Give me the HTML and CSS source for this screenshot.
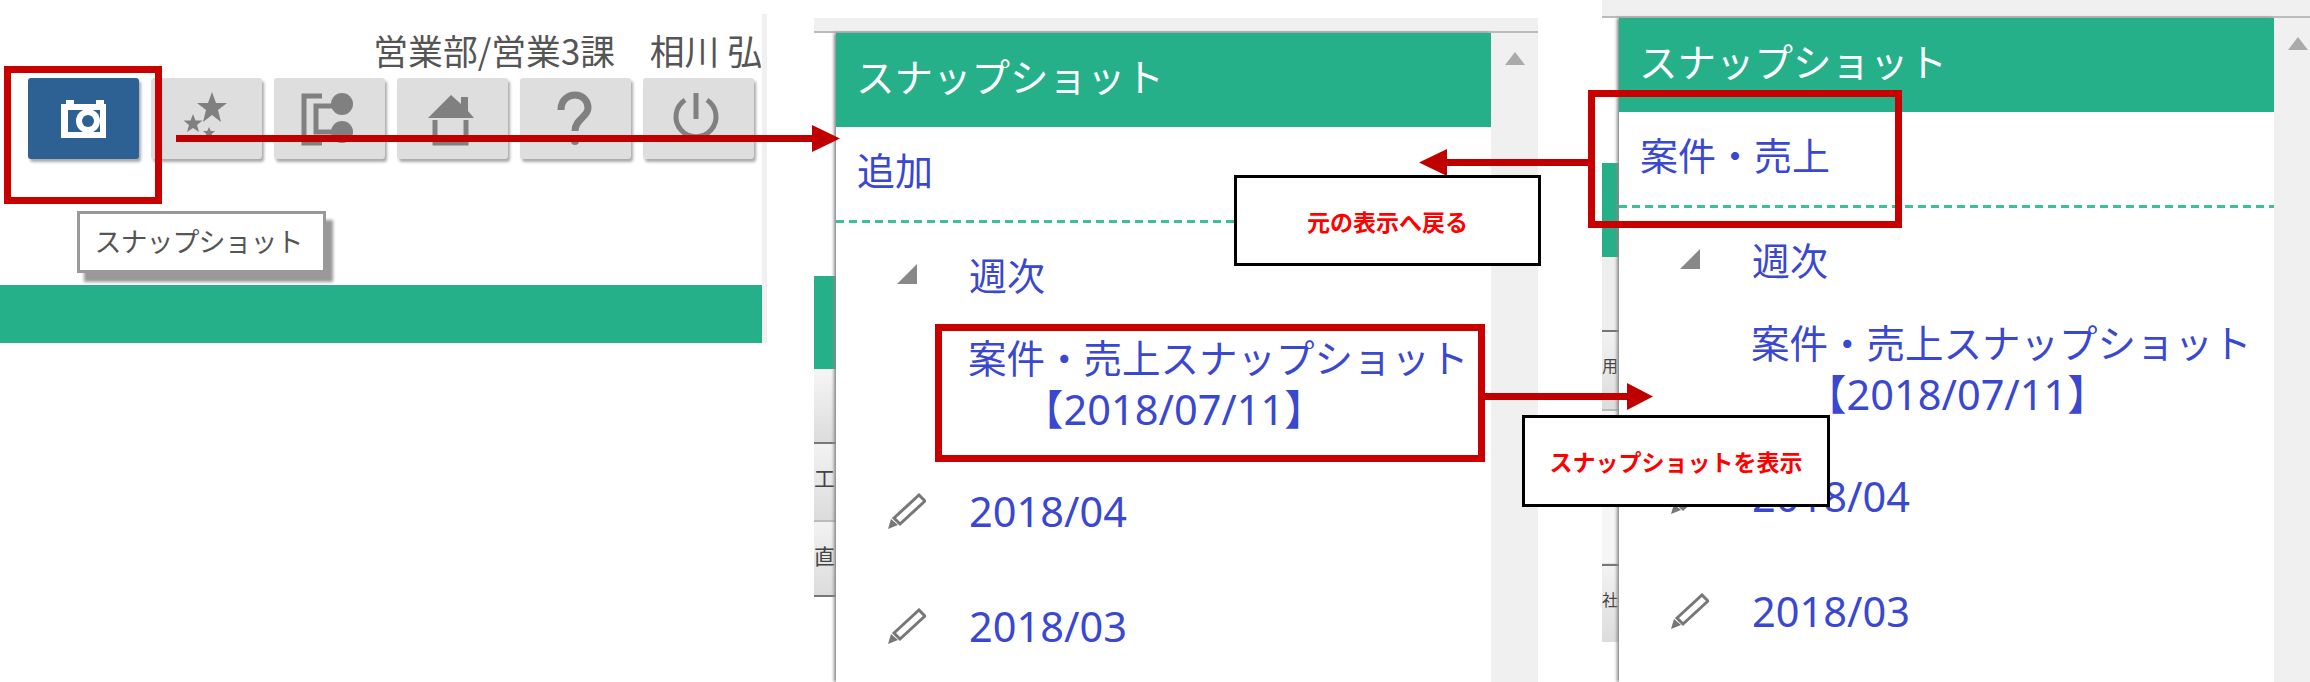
FILE: index.html
```html
<!DOCTYPE html>
<html lang="ja">
<head>
    <meta charset="utf-8">
    <title>スナップショット</title>
    <link rel="stylesheet" href="styles.css">
</head>
<body>
    <section class="menu">
        <div class="user">営業部/営業3課　相川 弘</div>
        <div class="buttons">
            <div class="btn active">
                <svg viewBox="0 0 111 81">
                    <path class="white" d="M33 26h5v-4h8v4h22v-4h8v4h2v34h-45z"/>
                    <rect class="blue" x="40" y="32" width="32" height="22"/>
                    <circle class="white" cx="60" cy="43" r="12"/>
                    <circle class="blue" cx="60" cy="43" r="6"/>
                </svg>
            </div>
            <div class="btn">
                <svg viewBox="0 0 111 81">
                    <path class="grey" d="M61 14l4 11 11 0-9 7 3 12-9-7-9 7 3-12-9-7 11 0z"/>
                    <path class="grey" d="M42 36l2.500 6.500 7 0-5.500 4.500 2 7-6-4-6 4 2-7-5.500-4.500 7 0z"/>
                    <path class="grey" d="M58 49l1.800 4 4.200 0-3.300 3 1.300 5-4-3-4 3 1.300-5-3.300-3 4.200 0z"/>
                </svg>
            </div>
            <div class="btn">
                <svg viewBox="0 0 111 81">
                    <path class="line" d="M48 18H30V65H48"/>
                    <path class="line" d="M58 28H42V54H58"/>
                    <circle class="grey" cx="68" cy="26" r="11"/>
                    <circle class="grey" cx="68" cy="54" r="11"/>
                </svg>
            </div>
            <div class="btn">
                <svg viewBox="0 0 111 81">
                    <path class="grey" d="M31 40L54 17 64 26V19H71V33L77 40Z"/>
                    <path class="line" d="M38 42V65H69V42"/>
                </svg>
            </div>
            <div class="btn">
                <svg viewBox="0 0 111 81">
                    <path class="line thick" d="M41 32C41 21 49 17 55 17 63 17 68 23 68 30 68 39 55 41 55 53"/>
                    <circle class="grey" cx="55" cy="63" r="4"/>
                </svg>
            </div>
            <div class="btn">
                <svg viewBox="0 0 111 81">
                    <path class="line" d="M42 22A20 20 0 1 0 64 22"/>
                    <path class="line" d="M53 15V41"/>
                </svg>
            </div>
        </div>
        <div class="greenbar"></div>
        <div class="tooltip">スナップショット</div>
    </section>

    <section class="panel mid">
        <div class="strip"></div>
        <div class="side">
            <div class="band green mid-green"></div>
            <div class="band fade mid-a"></div>
            <div class="band grey-row mid-b">工</div>
            <div class="band grey-row mid-c">直</div>
        </div>
        <div class="main">
            <h1>スナップショット</h1>
            <div class="add">追加</div>
            <ul class="snaps">
                <li class="week">
                    <svg class="tri" viewBox="0 0 20 20"><polygon points="20,0 20,20 0,20"/></svg>
                    <span>週次</span>
                </li>
                <li class="snap">
                    <div>案件・売上スナップショット</div>
                    <div class="num shift">【2018/07/11】</div>
                </li>
                <li class="month">
                    <svg class="pen" viewBox="0 0 38 36">
                        <path class="pen-body" d="M6 25L31 2 37 8 12 31Z"/>
                        <polygon points="0,36 3,26 10,32"/>
                    </svg>
                    <span class="num">2018/04</span>
                </li>
                <li class="month">
                    <svg class="pen" viewBox="0 0 38 36">
                        <path class="pen-body" d="M6 25L31 2 37 8 12 31Z"/>
                        <polygon points="0,36 3,26 10,32"/>
                    </svg>
                    <span class="num">2018/03</span>
                </li>
            </ul>
        </div>
        <div class="scroll"><i class="up"></i></div>
    </section>

    <section class="panel right">
        <div class="strip"></div>
        <div class="side">
            <div class="band green right-green"></div>
            <div class="band right-a"></div>
            <div class="band grey-row right-b">用</div>
            <div class="band right-c"></div>
            <div class="band grey-row right-d">社</div>
        </div>
        <div class="main">
            <h1>スナップショット</h1>
            <div class="add">案件・売上</div>
            <ul class="snaps">
                <li class="week">
                    <svg class="tri" viewBox="0 0 20 20"><polygon points="20,0 20,20 0,20"/></svg>
                    <span>週次</span>
                </li>
                <li class="snap">
                    <div>案件・売上スナップショット</div>
                    <div class="num shift">【2018/07/11】</div>
                </li>
                <li class="month">
                    <svg class="pen" viewBox="0 0 38 36">
                        <path class="pen-body" d="M6 25L31 2 37 8 12 31Z"/>
                        <polygon points="0,36 3,26 10,32"/>
                    </svg>
                    <span class="num">2018/04</span>
                </li>
                <li class="month">
                    <svg class="pen" viewBox="0 0 38 36">
                        <path class="pen-body" d="M6 25L31 2 37 8 12 31Z"/>
                        <polygon points="0,36 3,26 10,32"/>
                    </svg>
                    <span class="num">2018/03</span>
                </li>
            </ul>
        </div>
        <div class="scroll"><i class="up"></i></div>
    </section>

    <!-- annotations on top of the screenshots -->
    <svg class="arrows" viewBox="0 0 2310 682">
        <rect x="176" y="135" width="640" height="7"/>
        <polygon points="812,125 840,138.500 812,152"/>
        <rect x="1445" y="159" width="143" height="7"/>
        <polygon points="1447,149 1419,162.500 1447,176"/>
        <rect x="1485" y="393" width="145" height="7"/>
        <polygon points="1627,383 1653,396.500 1627,410"/>
    </svg>
    <div class="frame frame-camera"></div>
    <div class="frame frame-snap"></div>
    <div class="frame frame-back"></div>
    <div class="note note-back">元の表示へ戻る</div>
    <div class="note note-show">スナップショットを表示</div>
</body>
</html>
```

FILE: styles.css
```css
html{
    background-color: #fff;
}
body{
    position: relative;
    display: flex;
    align-items: flex-start;
    width: 2310px;
    height: 682px;
    margin: 0;
    overflow: hidden;
    font-family: "Noto Sans CJK JP", sans-serif;
}
/*=======Top menu=======*/
.menu{
    position: relative;
    flex: none;
    width: 762px;
    margin-top: 14px;
    border-right: 5px solid #f0f0f0;
}
.user{
    height: 40px;
    margin-top: 16px;
    color: #555;
    font-size: 34.8px;
    line-height: 40px;
    text-align: right;
    white-space: nowrap;
}
.buttons{
    display: flex;
    gap: 12px;
    margin-top: 8px;
    padding-left: 28px;
}
.btn{
    width: 111px;
    height: 81px;
    background-color: #dedede;
    border-radius: 3px;
    box-shadow: 2px 3px 3px #aaa;
}
.btn svg{
    display: block;
    width: 111px;
    height: 81px;
}
.btn.active{
    background-color: #2d6093;
}
.white{
    fill: #fff;
}
.blue{
    fill: #2d6093;
}
.grey{
    fill: #808080;
}
.line{
    fill: none;
    stroke: #808080;
    stroke-width: 5;
}
.line.thick{
    stroke-width: 7;
}
.greenbar{
    height: 58px;
    margin-top: 126px;
    background-color: #25b089;
}
.tooltip{
    position: absolute;
    top: 197px;
    left: 77px;
    width: 243px;
    height: 56px;
    padding-right: 6px;
    box-sizing: content-box;
    width: 237px;
    border: 3px solid #999;
    background-color: #fff;
    box-shadow: 7px 9px 3px #999;
    color: #555;
    font-size: 27px;
    letter-spacing: -1px;
    line-height: 54px;
    text-align: center;
    white-space: nowrap;
}
/*=======Snapshot panels=======*/
.panel{
    display: grid;
    flex: none;
    grid-template-columns: 22px 655px 47px;
    grid-template-rows: auto 1fr;
}
.mid{
    height: 664px;
    margin-top: 18px;
    margin-left: 47px;
}
.right{
    height: 682px;
    margin-left: 64px;
    grid-template-columns: 17px 655px 36px;
}
.strip{
    grid-column: 1 / -1;
    height: 13px;
    background-color: #f0f0f0;
    border-bottom: 2px solid #bbb;
}
.right .strip{
    height: 16px;
}
.side{
    display: flex;
    flex-direction: column;
    overflow: hidden;
}
.band{
    flex: none;
}
.green{
    background-color: #25b089;
}
.fade{
    background: linear-gradient(#f6f6f6, #dcdcdc);
    border-bottom: 2px solid #777;
}
.grey-row{
    background: linear-gradient(#f2f2f2, #dcdcdc);
    border-bottom: 2px solid #bbb;
    color: #444;
    font-size: 21px;
    line-height: 66px;
    white-space: nowrap;
}
.mid-green{
    height: 93px;
    margin-top: 243px;
}
.mid-a{
    height: 73px;
}
.mid-b{
    height: 76px;
}
.mid-c{
    height: 73px;
    border-bottom-color: #777;
}
.right-green{
    height: 94px;
    margin-top: 145px;
}
.right-a{
    height: 73px;
    background-color: #eee;
    border-bottom: 2px solid #777;
}
.right-b{
    height: 77px;
    font-size: 16px;
}
.right-c{
    height: 152px;
    background-color: #f6f6f6;
    border-bottom: 1px solid #e2e2e2;
}
.right-d{
    height: 76px;
    border-top: 2px solid #777;
    border-bottom: none;
    font-size: 16px;
}
.main{
    background-color: #fff;
    box-shadow: -2px 0 3px #888;
}
.main h1{
    height: 94px;
    margin: 0;
    padding-left: 20px;
    background-color: #25b089;
    color: #fff;
    font-size: 38.500px;
    font-weight: 400;
    line-height: 84px;
    white-space: nowrap;
}
.add{
    height: 96px;
    padding-left: 21px;
    background: repeating-linear-gradient(90deg, #3cc09a 0 8px, transparent 8px 13px) left bottom / 100% 3px no-repeat;
    color: #3a47d0;
    font-size: 38px;
    line-height: 84px;
}
.snaps{
    margin: 0;
    padding: 26px 0 0 52px;
    list-style: none;
    color: #3a47d0;
    font-size: 38px;
    line-height: 50px;
}
.week,
.month{
    display: flex;
    align-items: center;
    gap: 43px;
    height: 50px;
}
.snap{
    margin: 32px 0 52px 80px;
    font-size: 38.500px;
    white-space: nowrap;
}
.month + .month{
    margin-top: 65px;
}
.num{
    font-family: "Noto Sans", "Noto Sans CJK JP", sans-serif;
    font-size: 41.500px;
}
.shift{
    margin-top: 3px;
    padding-left: 54px;
}
.tri{
    flex: none;
    width: 20px;
    height: 20px;
    margin: 0 9px 0 9px;
    fill: #888;
}
.pen{
    flex: none;
    width: 38px;
    height: 36px;
    fill: #777;
}
.pen-body{
    fill: none;
    stroke: #777;
    stroke-width: 3;
}
.scroll{
    background-color: #f0f0f0;
    padding: 19px 0 0 14px;
}
.up{
    display: block;
    width: 0;
    height: 0;
    border-left: 10px solid transparent;
    border-right: 10px solid transparent;
    border-bottom: 13px solid #aaa;
}
/*=======Annotations=======*/
.arrows{
    position: absolute;
    top: 0;
    left: 0;
    width: 2310px;
    height: 682px;
    fill: #c00000;
}
.frame{
    position: absolute;
    box-sizing: border-box;
    border: 7px solid #c80000;
}
.frame-camera{
    top: 66px;
    left: 4px;
    width: 158px;
    height: 138px;
}
.frame-snap{
    top: 324px;
    left: 935px;
    width: 550px;
    height: 138px;
}
.frame-back{
    top: 90px;
    left: 1588px;
    width: 314px;
    height: 138px;
}
.note{
    position: absolute;
    box-sizing: border-box;
    display: flex;
    justify-content: center;
    align-items: center;
    border: 3px solid #000;
    background-color: #fff;
    color: #f00;
    font-size: 23px;
    font-weight: 700;
    white-space: nowrap;
}
.note-back{
    top: 175px;
    left: 1234px;
    width: 307px;
    height: 91px;
}
.note-show{
    top: 415px;
    left: 1522px;
    width: 308px;
    height: 92px;
}
```
